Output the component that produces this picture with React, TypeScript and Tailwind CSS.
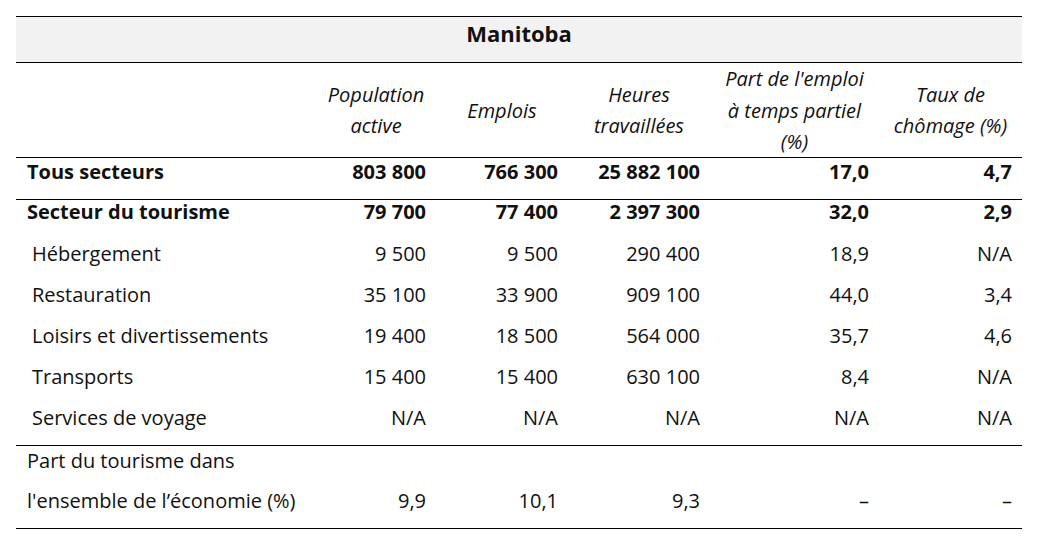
const cols = 'grid grid-cols-[300px_120px_132px_142px_169px_143px]'

const rows = [
  { label: 'Hébergement', v: ['9 500', '9 500', '290 400', '18,9', 'N/A'] },
  { label: 'Restauration', v: ['35 100', '33 900', '909 100', '44,0', '3,4'] },
  { label: 'Loisirs et divertissements', v: ['19 400', '18 500', '564 000', '35,7', '4,6'] },
  { label: 'Transports', v: ['15 400', '15 400', '630 100', '8,4', 'N/A'] },
  { label: 'Services de voyage', v: ['N/A', 'N/A', 'N/A', 'N/A', 'N/A'] },
]

function Nums({ v }: { v: string[] }) {
  return (
    <>
      {v.map((x, i) => (
        <div key={i} className="pr-[10px] text-right">{x}</div>
      ))}
    </>
  )
}

export default function App() {
  return (
    <div className="min-h-screen bg-white px-4 pt-4 text-[20px] text-[#111] font-['Open_Sans',sans-serif]">
      <div className="w-[1006px] border-t border-black">
        {/* Province title */}
        <div className="h-[46px] border-b border-black bg-[#f2f2f2] text-center text-[22px] font-bold leading-[33px]">
          Manitoba
        </div>

        {/* Column headings */}
        <div className={`${cols} h-[95px] items-center border-b border-black pb-[3px] text-center italic leading-[31.5px]`}>
          <div />
          <div>Population<br />active</div>
          <div>Emplois</div>
          <div>Heures<br />travaillées</div>
          <div>Part de l'emploi<br />à temps partiel<br />(%)</div>
          <div>Taux de<br />chômage (%)</div>
        </div>

        <div className={`${cols} h-[42px] border-b border-black font-bold leading-[27px]`}>
          <div className="pl-[11px]">Tous secteurs</div>
          <Nums v={['803 800', '766 300', '25 882 100', '17,0', '4,7']} />
        </div>

        <div className={`${cols} h-[40px] font-bold leading-[24px]`}>
          <div className="pl-[11px]">Secteur du tourisme</div>
          <Nums v={['79 700', '77 400', '2 397 300', '32,0', '2,9']} />
        </div>

        {rows.map((r, ri) => (
          <div
            key={r.label}
            className={`${cols} leading-[27px] ${ri === rows.length - 1 ? 'h-[42px] border-b border-black' : 'h-[41px]'}`}
          >
            <div className="pl-[16px]">{r.label}</div>
            <Nums v={r.v} />
          </div>
        ))}

        {/* Share of tourism in the whole economy */}
        <div className={`${cols} h-[83px] items-end border-b border-black pb-[14px] leading-[30px]`}>
          <div className="pl-[11px]">
            <div className="mb-[10px]">Part du tourisme dans</div>
            <div>l'ensemble de l’économie (%)</div>
          </div>
          <Nums v={['9,9', '10,1', '9,3', '–', '–']} />
        </div>
      </div>
    </div>
  )
}
